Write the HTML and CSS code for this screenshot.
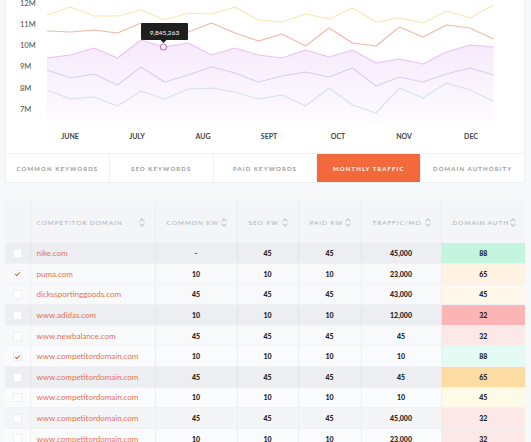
FILE: index.html
```html
<!DOCTYPE html>
<html lang="en">
<head>
  <meta charset="UTF-8" />
  <title>Competitor Traffic</title>
  <link rel="stylesheet" href="styles.css">
</head>
<body>
  <div class="page">
    <div class="card chart-card">
      <svg class="chart" width="520" height="153" viewBox="5 0 520 153">
        <defs>
          <linearGradient id="fade" x1="0" y1="0" x2="0" y2="1">
            <stop offset="0" stop-color="#f6e9fc" />
            <stop offset="1" stop-color="#fdfbfe" />
          </linearGradient>
        </defs>
        <g class="axis">
          <text x="20" y="6">12M</text>
          <text x="20" y="27">11M</text>
          <text x="20" y="48">10M</text>
          <text x="20" y="69">9M</text>
          <text x="20" y="91">8M</text>
          <text x="20" y="112">7M</text>
        </g>
        <polygon fill="url(#fade)" points="47,58 70.5,55 94,48 117.5,58 141,40 164.5,47 188,43 211.5,55 235,48 258.5,55 282,58 305.5,50 329,57 352.5,50 376,63 399.5,59 423,64 446.5,52 470,45 493.5,47 493.5,121 47,121" />
        <g fill="none" stroke-width="1.1" stroke-linejoin="round">
          <polyline stroke="#f9e6b2" points="47,15 70.5,7 94,16 117.5,16 141,10 164.5,20 188,13 211.5,14 235,7 258.5,20 282,22 305.5,14 329,19 352.5,8 376,22 399.5,18 423,23 446.5,11 470,18 493.5,5" />
          <polyline stroke="#f3b7a4" points="47,31 70.5,32 94,30 117.5,33 141,23 164.5,33 188,32 211.5,23 235,33 258.5,41 282,34 305.5,46 329,28 352.5,43 376,46 399.5,27 423,37 446.5,25 470,28 493.5,39" />
          <polyline stroke="#e9c2f2" points="47,58 70.5,55 94,48 117.5,58 141,40 164.5,47 188,43 211.5,55 235,48 258.5,55 282,58 305.5,50 329,57 352.5,50 376,63 399.5,59 423,64 446.5,52 470,45 493.5,47" />
          <polyline stroke="#d3d0f0" points="47,70 70.5,78 94,74 117.5,85 141,67 164.5,82 188,75 211.5,67 235,73 258.5,82 282,76 305.5,72 329,77 352.5,68 376,86 399.5,77 423,82 446.5,74 470,68 493.5,75" />
          <polyline stroke="#d4e0ec" points="47,90 70.5,99 94,97 117.5,106 141,91 164.5,99 188,89 211.5,88 235,92 258.5,99 282,95 305.5,106 329,88 352.5,105 376,113 399.5,88 423,98 446.5,83 470,90 493.5,101" />
        </g>
        <g class="tooltip">
          <rect x="141" y="23" width="47" height="17" rx="1" fill="#1f1f1f" />
          <polygon points="160.5,40 166.5,40 163.5,43" fill="#1f1f1f" />
          <text x="164.5" y="34.5" text-anchor="middle">9,845,263</text>
        </g>
        <circle cx="163.5" cy="47" r="3" fill="#fff" stroke="#c27bd9" stroke-width="1.2" />
        <g class="months" text-anchor="middle">
          <text x="70" y="139">JUNE</text>
          <text x="137" y="139">JULY</text>
          <text x="203" y="139">AUG</text>
          <text x="269" y="139">SEPT</text>
          <text x="338" y="139">OCT</text>
          <text x="404" y="139">NOV</text>
          <text x="471" y="139">DEC</text>
        </g>
      </svg>
      <div class="tabs">
        <div class="tab">COMMON KEYWORDS</div>
        <div class="tab">SEO KEYWORDS</div>
        <div class="tab">PAID KEYWORDS</div>
        <div class="tab active">MONTHLY TRAFFIC</div>
        <div class="tab">DOMAIN AUTHORITY</div>
      </div>
    </div>

    <table class="grid">
      <colgroup>
        <col style="width:25px"><col style="width:125px"><col style="width:82px"><col style="width:61px"><col style="width:63px"><col style="width:80px"><col style="width:84px">
      </colgroup>
      <thead>
        <tr>
          <th></th>
          <th><div class="th">COMPETITOR DOMAIN <span class="sort"></span></div></th>
          <th><div class="th">COMMON KW <span class="sort"></span></div></th>
          <th><div class="th">SEO KW <span class="sort"></span></div></th>
          <th><div class="th">PAID KW <span class="sort"></span></div></th>
          <th><div class="th">TRAFFIC/MO <span class="sort"></span></div></th>
          <th><div class="th">DOMAIN AUTH <span class="sort"></span></div></th>
        </tr>
      </thead>
      <tbody>
        <tr class="gray">
          <td><span class="box"></span></td><td class="domain">nike.com</td><td>-</td><td>45</td><td>45</td><td>45,000</td><td class="auth a-green">88</td>
        </tr>
        <tr>
          <td><span class="box checked"></span></td><td class="domain">puma.com</td><td>10</td><td>10</td><td>10</td><td>23,000</td><td class="auth a-peach">65</td>
        </tr>
        <tr>
          <td><span class="box"></span></td><td class="domain">dickssportinggoods.com</td><td>45</td><td>45</td><td>45</td><td>43,000</td><td class="auth a-cream">45</td>
        </tr>
        <tr class="gray">
          <td><span class="box"></span></td><td class="domain">www.adidas.com</td><td>10</td><td>10</td><td>10</td><td>12,000</td><td class="auth a-red">32</td>
        </tr>
        <tr>
          <td><span class="box"></span></td><td class="domain">www.newbalance.com</td><td>45</td><td>45</td><td>45</td><td>45</td><td class="auth a-pink">32</td>
        </tr>
        <tr class="light">
          <td><span class="box checked"></span></td><td class="domain">www.competitordomain.com</td><td>10</td><td>10</td><td>10</td><td>10</td><td class="auth a-mint">88</td>
        </tr>
        <tr class="gray">
          <td><span class="box"></span></td><td class="domain">www.competitordomain.com</td><td>45</td><td>45</td><td>45</td><td>45</td><td class="auth a-orange">65</td>
        </tr>
        <tr class="light">
          <td><span class="box"></span></td><td class="domain">www.competitordomain.com</td><td>10</td><td>10</td><td>10</td><td>10</td><td class="auth a-yellow">45</td>
        </tr>
        <tr class="mid">
          <td><span class="box"></span></td><td class="domain">www.competitordomain.com</td><td>45</td><td>45</td><td>45</td><td>45,000</td><td class="auth a-pink">32</td>
        </tr>
        <tr class="light">
          <td><span class="box"></span></td><td class="domain">www.competitordomain.com</td><td>10</td><td>10</td><td>10</td><td>23,000</td><td class="auth a-pink">32</td>
        </tr>
      </tbody>
    </table>
  </div>
</body>
</html>
```

FILE: styles.css
```css
body {
  margin: 0;
  background: #f7f8fa;
  font-family: Lato, "Open Sans", Arial, sans-serif;
  overflow: hidden;
}

.page {
  padding-left: 5px;
  width: 520px;
}

.card {
  background: #fff;
  border: 1px solid #eef0f3;
  border-top: 0;
  box-sizing: border-box;
}

.chart {
  display: block;
  margin-left: -1px;
}

.axis text {
  font-size: 7.5px;
  fill: #4a4a4a;
}

.months text {
  font-size: 7px;
  font-weight: 700;
  fill: #444;
}

.tooltip text {
  font-size: 6.5px;
  fill: #fff;
}

.tabs {
  display: flex;
  border-top: 1px solid #eef0f3;
  height: 28px;
}

.tab {
  flex: 1;
  display: flex;
  align-items: center;
  justify-content: center;
  font-size: 6px;
  font-weight: 700;
  letter-spacing: 1.1px;
  color: #9b9b9b;
  border-right: 1px solid #eef0f3;
  white-space: nowrap;
}

.tab:last-child { border-right: 0; }

.tab.active {
  background: #f26a3b;
  color: #fff;
}

.grid {
  margin-top: 18px;
  width: 520px;
  border-collapse: collapse;
  table-layout: fixed;
}

.grid th {
  height: 42px;
  padding: 0 10px 0 11px;
  background: #f3f5f8;
  border-right: 1px solid #e9ebef;
  font-size: 6.5px;
  font-weight: 400;
  letter-spacing: 0.9px;
  color: #acb1b8;
  text-align: left;
}

.grid th:first-child { padding: 0; }
.grid th:nth-child(2) { padding-left: 6px; }
.grid th:last-child { border-right: 0; }

.th {
  display: flex;
  justify-content: space-between;
  align-items: center;
  white-space: nowrap;
}

.sort {
  width: 5px;
  height: 9px;
  position: relative;
}

.sort::before,
.sort::after {
  content: "";
  position: absolute;
  left: 0.5px;
  width: 3px;
  height: 3px;
  border-left: 1px solid #bfc3c9;
  border-top: 1px solid #bfc3c9;
}

.sort::before { top: 1px; transform: rotate(45deg); }
.sort::after { bottom: 1px; transform: rotate(225deg); }

.grid td {
  height: 20.6px;
  padding: 0;
  background: #f7f9fb;
  border-right: 1px solid #eceef2;
  border-bottom: 1px solid #f0f2f5;
  box-sizing: border-box;
  font-size: 7px;
  font-weight: 900;
  color: #222;
  text-align: center;
}

.grid tr.gray td { background: #eceef1; border-right-color: #e2e5e9; }
.grid tr.light td { background: #fafbfd; }
.grid tr.mid td { background: #f3f5f7; }

.grid td.domain {
  text-align: left;
  padding-left: 6px;
  font-size: 8px;
  font-weight: 400;
  color: #e8704f;
  white-space: nowrap;
}

.box {
  display: inline-block;
  width: 9px;
  height: 9px;
  background: #fff;
  border: 1px solid #edf0f3;
  box-sizing: border-box;
  vertical-align: middle;
  position: relative;
}

.box.checked::after {
  content: "";
  position: absolute;
  left: 2.5px;
  top: 0.5px;
  width: 2px;
  height: 4px;
  border-right: 1.2px solid #e45a3c;
  border-bottom: 1.2px solid #e45a3c;
  transform: rotate(45deg);
}

.grid td.auth { border-right: 0; }
.grid tr td.a-green { background: #c4f5df; }
.grid tr td.a-mint { background: #e3fbf2; }
.grid tr td.a-peach { background: #fef3e3; }
.grid tr td.a-cream { background: #fef7ea; }
.grid tr td.a-yellow { background: #fefae8; }
.grid tr td.a-orange { background: #fcdca2; }
.grid tr td.a-red { background: #fbb5b5; }
.grid tr td.a-pink { background: #fde8e8; }
```
